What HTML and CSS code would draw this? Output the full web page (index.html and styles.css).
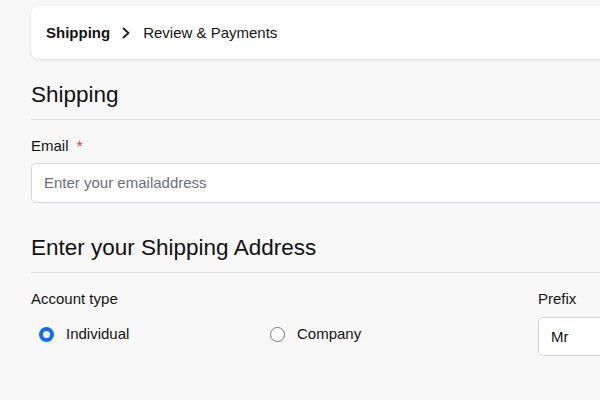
FILE: index.html
```html
<!DOCTYPE html>
<html lang="en">
<head>
<meta charset="utf-8">
<title>Checkout - Shipping</title>
<link rel="stylesheet" href="styles.css">
</head>
<body>
<div class="page">
  <nav class="crumbs">
    <span class="crumb current">Shipping</span>
    <svg class="chev" width="8" height="12" viewBox="0 0 8 12" aria-hidden="true"><polyline points="1.5,1.5 6.5,6 1.5,10.5" fill="none" stroke="#1f1f1f" stroke-width="1.8" stroke-linecap="round" stroke-linejoin="round"/></svg>
    <span class="crumb">Review &amp; Payments</span>
  </nav>

  <h2 class="section-title">Shipping</h2>
  <div class="field">
    <label class="label">Email <span class="req">*</span></label>
    <div class="input"><span class="placeholder">Enter your emailaddress</span></div>
  </div>

  <h2 class="section-title second">Enter your Shipping Address</h2>
  <div class="row">
    <div class="account">
      <div class="label">Account type</div>
      <div class="radios">
        <div class="opt"><span class="radio checked"></span><span>Individual</span></div>
        <div class="opt"><span class="radio"></span><span>Company</span></div>
      </div>
    </div>
    <div class="prefix">
      <div class="label">Prefix</div>
      <div class="select">Mr</div>
    </div>
  </div>
</div>
</body>
</html>
```

FILE: styles.css
```css
html, body {
  margin: 0;
  padding: 0;
  background: #f8f8f8;
  overflow: hidden;
}
body {
  font-family: "Liberation Sans", Arial, sans-serif;
  color: #141414;
  font-size: 15px;
  line-height: 20px;
}
.page {
  width: 900px;
  padding: 6px 0 0 31px;
}
.crumbs {
  display: flex;
  align-items: center;
  height: 53px;
  padding: 0 15px;
  background: #ffffff;
  border-radius: 8px;
  box-shadow: 0 1px 3px rgba(0, 0, 0, 0.12);
}
.crumb {
  font-size: 15px;
}
.crumb.current {
  font-weight: bold;
}
.chev {
  margin: 0 13px 0 12px;
}
.section-title {
  margin: 22px 0 0;
  font-size: 22.5px;
  font-weight: normal;
  line-height: 28px;
  padding-bottom: 10px;
  border-bottom: 1px solid #e2e2e2;
  color: #111;
}
.section-title.second {
  margin-top: 31px;
}
.field {
  margin-top: 16px;
}
.label {
  display: block;
  font-size: 15px;
  line-height: 20px;
}
.req {
  color: #ee2a2f;
  margin-left: 4px;
}
.input {
  margin-top: 7px;
  height: 38px;
  border: 1px solid #d3d7de;
  border-radius: 5px;
  background: #fff;
  display: flex;
  align-items: center;
  padding: 0 12px;
}
.placeholder {
  color: #6c7079;
}
.row {
  display: flex;
  gap: 16px;
  margin-top: 16px;
}
.account {
  width: 491px;
}
.radios {
  display: grid;
  grid-template-columns: 231px 231px;
  margin-top: 15px;
  padding-left: 8px;
}
.opt {
  display: flex;
  align-items: center;
  gap: 12px;
}
.radio {
  box-sizing: border-box;
  width: 15px;
  height: 15px;
  border-radius: 50%;
  border: 1.5px solid #6f7580;
  background: #fff;
  margin-top: 1px;
}
.radio.checked {
  border: 4.5px solid #0d6efd;
}
.prefix {
  width: 300px;
}
.select {
  margin-top: 8px;
  height: 37px;
  border: 1px solid #d3d7de;
  border-radius: 5px;
  background: #fff;
  display: flex;
  align-items: center;
  padding: 0 12px;
  color: #111;
}
```
